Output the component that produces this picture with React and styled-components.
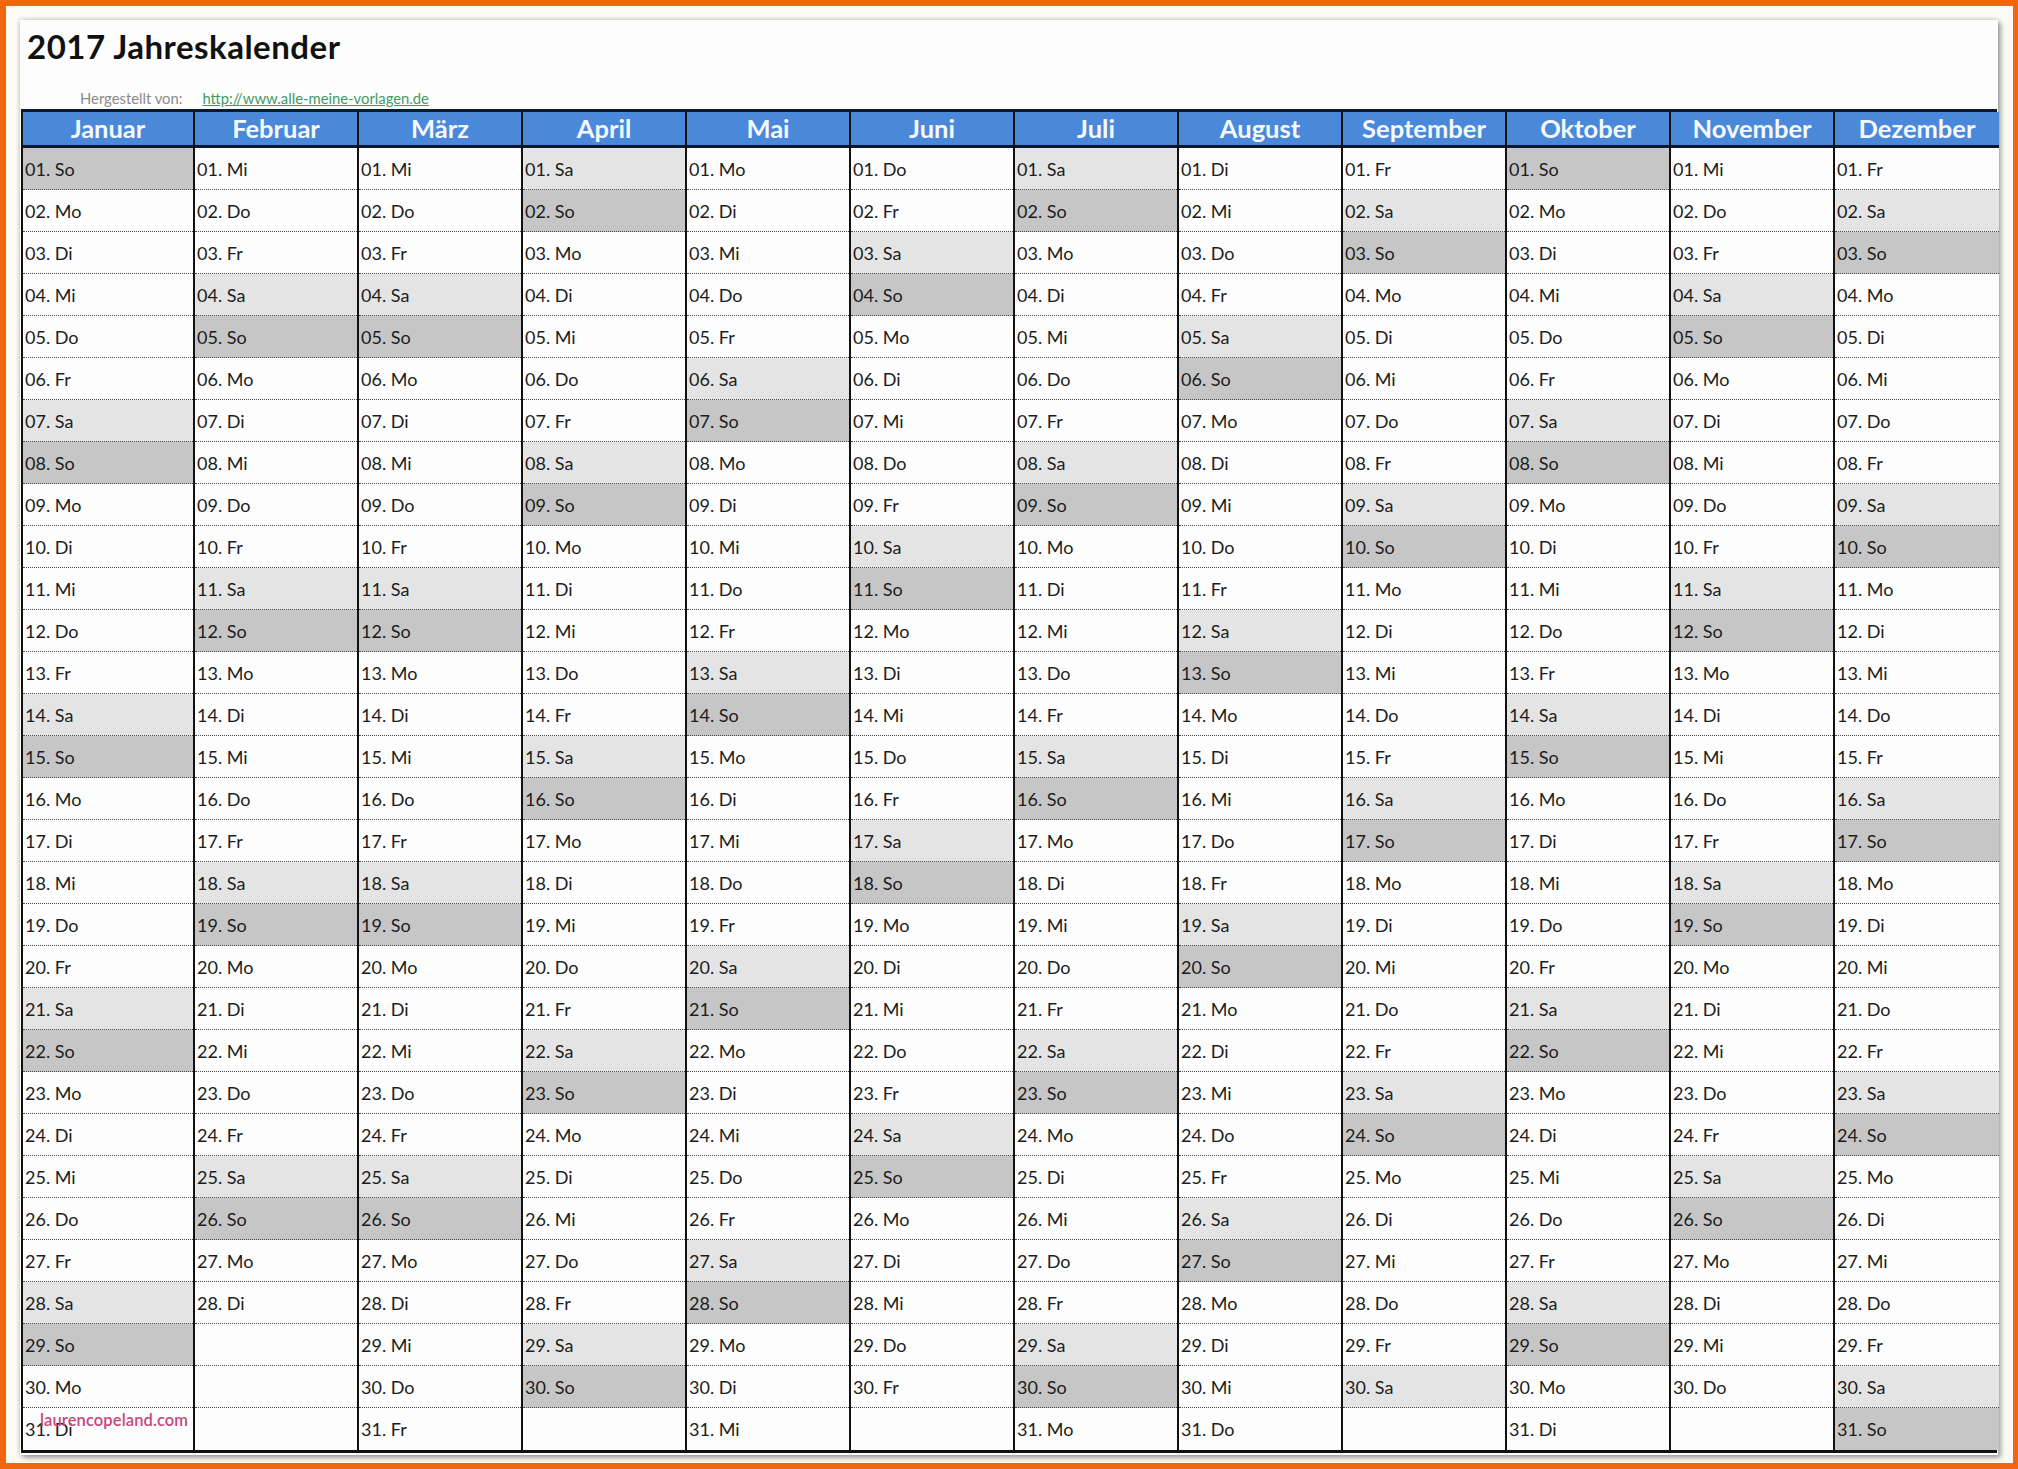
import React from "react";
import styled, { createGlobalStyle } from "styled-components";

const GlobalStyle = createGlobalStyle`
  * { box-sizing: border-box; }
  html, body {
    margin: 0;
    padding: 0;
    background: #f26511;
  }
  body {
    font-family: Lato, "Open Sans", "Liberation Sans", sans-serif;
    color: #1a1a1a;
  }
`;

const MONTHS = [
  "Januar",
  "Februar",
  "März",
  "April",
  "Mai",
  "Juni",
  "Juli",
  "August",
  "September",
  "Oktober",
  "November",
  "Dezember",
];
const WEEKDAYS = ["So", "Mo", "Di", "Mi", "Do", "Fr", "Sa"];

const Frame = styled.div`
  width: 2018px;
  height: 1469px;
  padding: 6px 5px 6px 6px;
  background: #f26511;
`;

const Mat = styled.div`
  height: 100%;
  background: #fbfaf3;
  padding: 14px 15px 8px 14px;
`;

const Sheet = styled.div`
  position: relative;
  height: 100%;
  background: #fdfdfd;
  box-shadow: 0 0 5px rgba(0, 0, 0, 0.25), 3px 3px 5px rgba(0, 0, 0, 0.3);
  padding: 7px 1px 0 1px;
`;

const Title = styled.h1`
  margin: 0 0 0 6px;
  font-size: 33px;
  line-height: 38px;
  font-weight: 700;
  letter-spacing: 0.5px;
  color: #111;
`;

const Credit = styled.div`
  height: 44px;
  display: flex;
  align-items: flex-end;
  gap: 20px;
  padding: 0 0 2px 59px;
  font-size: 14.8px;
  line-height: 18px;
`;

const CreditLabel = styled.span`
  color: #8a8a8a;
`;

const CreditLink = styled.span`
  color: #3f9a66;
  text-decoration: underline;
`;

const Table = styled.div`
  display: grid;
  grid-template-columns: 172px repeat(11, 164px);
  border: 2px solid #111;
  border-top: 3px solid #0c1730;
  border-bottom: 3px solid #111;
  width: 1976px;
`;

const Column = styled.div`
  display: flex;
  flex-direction: column;
  border-right: ${(p) => (p.last ? "none" : "2px solid #111")};
`;

const Header = styled.div`
  height: 36px;
  background: #4a88da;
  border-bottom: 3px solid #0c1730;
  color: #f5f9ff;
  font-weight: 700;
  font-size: 25.5px;
  display: flex;
  align-items: center;
  justify-content: center;
  padding-bottom: 1px;
`;

const Day = styled.div`
  height: 42px;
  display: flex;
  align-items: center;
  padding: 0 0 0 2px;
  font-size: 18px;
  color: #1c1c1c;
  white-space: nowrap;
  background: ${(p) =>
    p.kind === "So" ? "#c6c6c6" : p.kind === "Sa" ? "#e4e4e4" : "#fdfdfd"};
  border-bottom: ${(p) => (p.last ? "none" : "1px dotted #4a4a4a")};
`;

const Watermark = styled.div`
  position: absolute;
  left: 20px;
  top: 1390px;
  font-size: 16.5px;
  font-weight: 600;
  color: #c4487f;
  letter-spacing: 0.1px;
`;

function monthDays(m) {
  const out = [];
  for (let d = 1; d <= 31; d++) {
    const date = new Date(2017, m, d);
    if (date.getMonth() !== m) {
      out.push(null);
    } else {
      out.push({ d, wd: WEEKDAYS[date.getDay()] });
    }
  }
  return out;
}

function MonthColumn({ name, index }) {
  const days = monthDays(index);
  return (
    <Column last={index === 11}>
      <Header>{name}</Header>
      {days.map((day, i) => (
        <Day key={i} kind={day ? day.wd : ""} last={i === 30}>
          {day ? `${String(day.d).padStart(2, "0")}. ${day.wd}` : ""}
        </Day>
      ))}
    </Column>
  );
}

export default function App() {
  return (
    <Frame>
      <GlobalStyle />
      <Mat>
        <Sheet>
          <Title>2017 Jahreskalender</Title>
          <Credit>
            <CreditLabel>Hergestellt von:</CreditLabel>
            <CreditLink>http://www.alle-meine-vorlagen.de</CreditLink>
          </Credit>
          <Table>
            {MONTHS.map((m, i) => (
              <MonthColumn key={m} name={m} index={i} />
            ))}
          </Table>
          <Watermark>laurencopeland.com</Watermark>
        </Sheet>
      </Mat>
    </Frame>
  );
}
